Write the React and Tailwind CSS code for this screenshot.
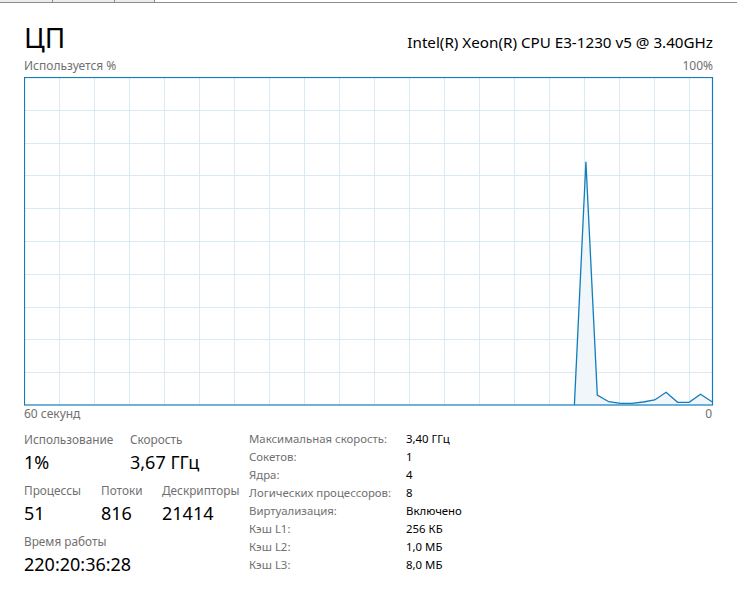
import React from 'react';

// CPU performance page: header, usage graph and the stats block below it

const GRID = '#d9eaf4';
const LINE = '#117dbb';

// last 60 s of samples, y in graph px (0 = 100%, 328 = 0%)
const samples = [
  [48, 328], [49, 84.7], [50, 318], [51, 324.7], [52, 326.3], [53, 326.3],
  [54, 325], [55, 323], [56, 315.3], [57, 325.3], [58, 325.3], [59, 317.3], [60, 324.7],
];

const W = 688;
const H = 328;

const UsageGraph = () => {
  const step = W / 60;
  const pts = samples.map(([i, y]) => `${(i * step).toFixed(1)},${y}`).join(' ');
  const first = samples[0][0] * step;
  const area = `${first.toFixed(1)},${H} ${pts} ${W},${H}`;
  const cols = Array.from({ length: 19 }, (_, k) => 35 * (k + 1) + 0.5);
  const rows = Array.from({ length: 9 }, (_, k) => Math.round(32.8 * (k + 1)) + 0.5);

  return (
    <svg width={W + 2} height={H + 1} className="block">
      {cols.map((x) => (
        <line key={'c' + x} x1={x} y1={0} x2={x} y2={H} stroke={GRID} strokeWidth="1" />
      ))}
      {rows.map((y) => (
        <line key={'r' + y} x1={0} y1={y} x2={W} y2={y} stroke={GRID} strokeWidth="1" />
      ))}
      <polygon points={area} fill="#f1f6fa" />
      <polyline points={pts} fill="none" stroke={LINE} strokeWidth="1.3" strokeLinejoin="miter" />
      <rect x="0.5" y="0.5" width={W} height={H - 0.5} fill="none" stroke={LINE} strokeWidth="1.2" />
    </svg>
  );
};

const Stat = ({ label, value, w }) => (
  <div className={w}>
    <div className="text-[11.8px] leading-[16px] text-[#707070]">{label}</div>
    <div className="mt-[3px] text-[18px] leading-[24px] text-black">{value}</div>
  </div>
);

const specs = [
  ['Максимальная скорость:', '3,40 ГГц'],
  ['Сокетов:', '1'],
  ['Ядра:', '4'],
  ['Логических процессоров:', '8'],
  ['Виртуализация:', 'Включено'],
  ['Кэш L1:', '256 КБ'],
  ['Кэш L2:', '1,0 МБ'],
  ['Кэш L3:', '8,0 МБ'],
];

const App = () => {
  return (
    <div
      className="w-[737px] h-[590px] bg-white overflow-hidden"
      style={{ fontFamily: '"Segoe UI", "Noto Sans", "Open Sans", sans-serif' }}
    >
      {/* tab strip remnant */}
      <div className="flex h-[3px] border-b border-[#8c8c8c]">
        <div className="w-[53px] bg-[#ececec] border-r border-[#8c8c8c]" />
        <div className="w-[62px] bg-[#ececec] border-r border-[#8c8c8c]" />
        <div className="w-[40px] bg-[#ececec] border-r border-[#8c8c8c]" />
        <div className="flex-1" />
      </div>

      <div className="px-[24px]">
        <div className="mt-[19px] h-[30px] flex items-baseline justify-between">
          <div className="text-[28px] leading-[30px] text-black">ЦП</div>
          <div className="text-[15.2px] leading-[20px] text-black">Intel(R) Xeon(R) CPU E3-1230 v5 @ 3.40GHz</div>
        </div>

        <div className="mt-[6px] flex justify-between text-[12px] leading-[16px] text-[#707070]">
          <span>Используется %</span>
          <span>100%</span>
        </div>

        <div className="mt-[3px]">
          <UsageGraph />
        </div>

        <div className="flex justify-between text-[12px] leading-[16px] text-[#707070] pr-[1px]">
          <span>60 секунд</span>
          <span>0</span>
        </div>

        <div className="mt-[9px] flex">
          <div className="w-[225px] flex flex-col gap-[8px]">
            <div className="flex">
              <Stat label="Использование" value="1%" w="w-[106px]" />
              <Stat label="Скорость" value="3,67 ГГц" />
            </div>
            <div className="flex">
              <Stat label="Процессы" value="51" w="w-[77px]" />
              <Stat label="Потоки" value="816" w="w-[61px]" />
              <Stat label="Дескрипторы" value="21414" />
            </div>
            <Stat label="Время работы" value="220:20:36:28" />
          </div>

          <div className="-mt-[1px] text-[11.4px] leading-[18px]">
            {specs.map(([k, v]) => (
              <div key={k} className="flex">
                <span className="w-[157px] text-[#707070] whitespace-nowrap">{k}</span>
                <span className="text-black">{v}</span>
              </div>
            ))}
          </div>
        </div>
      </div>
    </div>
  );
};

export default App;
